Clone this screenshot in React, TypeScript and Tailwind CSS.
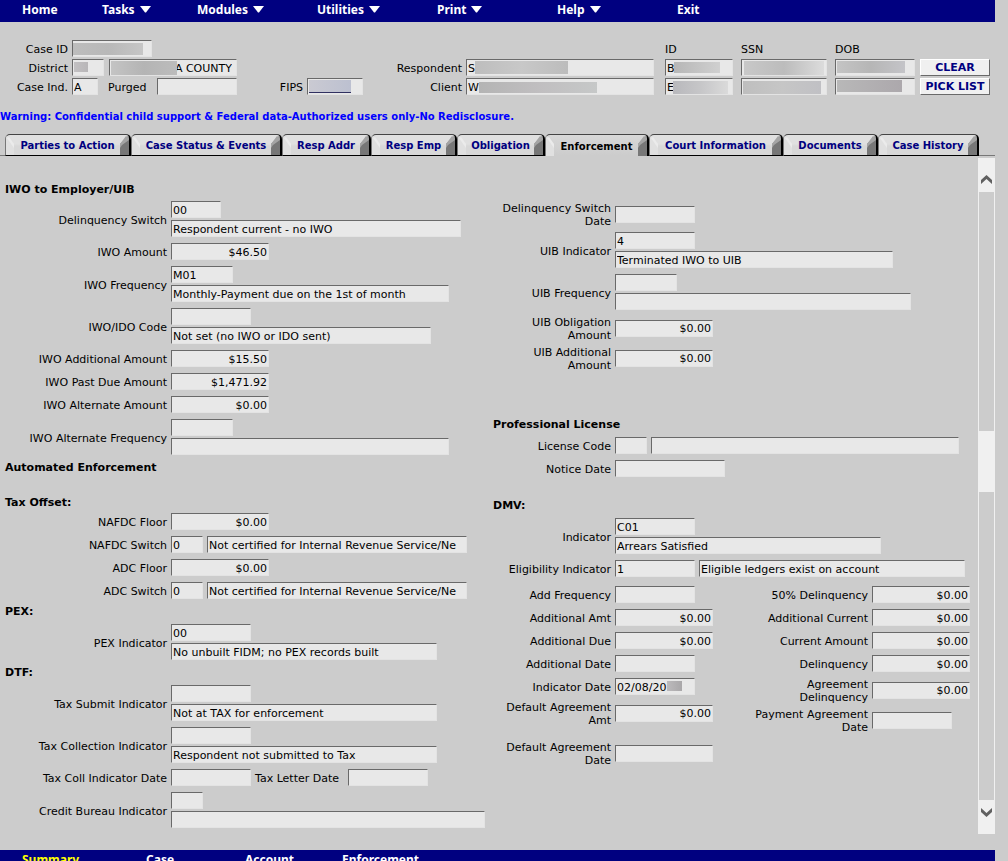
import React, { useId } from "react";

type FieldProps = {
  w: string;
  value?: string;
  label?: string;
  id?: string;
  money?: boolean;
  mask?: string;
  className?: string;
};

function Field({ w, value = "", label, id, money, mask, className = "px-px" }: FieldProps) {
  return (
    <span className={`relative block shrink-0 ${w}`}>
      <input
        id={id}
        aria-label={label}
        readOnly
        defaultValue={value}
        className={`block h-[17px] w-full border border-t-[#696969] border-r-[#e3e3e3] border-b-[#e3e3e3] border-l-[#696969] bg-[#e8e8e8] pt-px text-[11px] leading-[13px] text-black outline-none ${money ? "text-right" : ""} ${className}`}
      />
      {mask && <span className={`absolute bg-linear-to-r ${mask}`} />}
    </span>
  );
}

type RowProps = {
  label: string;
  fields: FieldProps[];
  stacked?: boolean;
  labelWidth?: string;
  children?: React.ReactNode;
};

function Row({ label, fields, stacked, labelWidth = "w-[118px]", children }: RowProps) {
  const id = useId();
  return (
    <div className="flex items-center gap-1">
      <label htmlFor={id} className={`shrink-0 pt-[3px] pb-px text-right ${labelWidth}`}>
        {label}
      </label>
      <div className={`flex py-[3px] ${stacked ? "flex-col gap-[2px]" : "items-center gap-1"}`}>
        {fields.map((f, i) => (
          <Field key={i} {...f} id={i === 0 ? id : undefined} label={i === 0 ? undefined : `${label} description`} />
        ))}
        {children}
      </div>
    </div>
  );
}

function LRow(props: RowProps) {
  return <Row {...props} labelWidth="w-[167px]" />;
}

function Heading({ children, className = "" }: { children: React.ReactNode; className?: string }) {
  return <h2 className={`flex h-[19px] items-center font-bold ${className}`}>{children}</h2>;
}

const menu = [
  { name: "Home", w: "w-20", drop: false },
  { name: "Tasks", w: "w-[95px]", drop: true },
  { name: "Modules", w: "w-[120px]", drop: true },
  { name: "Utilities", w: "w-[120px]", drop: true },
  { name: "Print", w: "w-[120px]", drop: true },
  { name: "Help", w: "w-[120px]", drop: true },
  { name: "Exit", w: "w-[120px]", drop: false },
];

const tabs = [
  { name: "Parties to Action", w: "w-[126px]" },
  { name: "Case Status & Events", w: "w-[151px]" },
  { name: "Resp Addr", w: "w-[89px]" },
  { name: "Resp Emp", w: "w-[86px]" },
  { name: "Obligation", w: "w-[88px]" },
  { name: "Enforcement", w: "w-[104px]" },
  { name: "Court Information", w: "w-[134px]" },
  { name: "Documents", w: "w-[95px]" },
  { name: "Case History", w: "w-[101px]" },
];

function Tab({ name, w, active }: { name: string; w: string; active: boolean }) {
  return (
    <button
      type="button"
      role="tab"
      aria-selected={active}
      className={`relative flex h-[22px] shrink-0 items-center justify-center overflow-hidden rounded-t-[5px] border-t border-r-2 border-l border-t-[#444] border-r-black border-l-[#777] pt-[2px] text-[10px] leading-3 font-bold ${w} ${active ? "bg-linear-to-b from-[#d8d8d8] to-[#ccc] text-black" : "border-b border-b-black bg-linear-to-b from-[#e0e0e0] from-45% to-[#d8d8d8] to-55% text-[#000080]"}`}
    >
      <svg className="absolute top-0 left-0" width="8" height="21" viewBox="0 0 8 21" aria-hidden="true">
        <path d="M0 0L8 10V21H0Z" fill="#e0e0e0" />
        <path d="M1 3L3 2L8 9V13Z" fill="#ebebeb" />
      </svg>
      <svg className="absolute top-0 right-0" width="9" height="21" viewBox="0 0 9 21" aria-hidden="true">
        <path d="M0 9L9 0V21H0Z" fill="#777" />
        <path d="M0 9L6 1L9 3V5L2 10L0 13Z" fill="#a4a4a4" />
      </svg>
      <span className="relative">{name}</span>
    </button>
  );
}

function Caret() {
  return (
    <svg width="11" height="7" viewBox="0 0 11 7" aria-hidden="true">
      <path d="M0 0H11L6 6.5H5Z" fill="white" />
    </svg>
  );
}

function Chevron({ up }: { up?: boolean }) {
  return (
    <svg width="11" height="9" viewBox="0 0 11 9" aria-hidden="true">
      <path d={up ? "M0 5L5.5 0L11 5V9L5.5 4L0 9Z" : "M0 0L5.5 5L11 0V4L5.5 9L0 4Z"} fill="#606060" />
    </svg>
  );
}

function ActionButton({ children }: { children: React.ReactNode }) {
  return (
    <button
      type="button"
      className="h-[17px] w-[70px] border border-t-white border-r-[#696969] border-b-[#696969] border-l-white bg-[#f0f0f0] text-[11px] leading-[13px] font-bold text-[#000080]"
    >
      {children}
    </button>
  );
}

const amt = "w-[98px]";
const notCertified = "Not certified for Internal Revenue Service/Ne";

function CaseHeader() {
  return (
    <header className="flex shrink-0 items-start pt-[18px]">
      <div className="flex w-[363px] shrink-0 flex-col gap-[2px]">
        <div className="flex items-center gap-1">
          <label htmlFor="caseId" className="w-[68px] pt-px text-right">Case ID</label>
          <Field id="caseId" w="w-20" mask="top-[3px] left-px h-3 w-[70px] from-[#bdbdbd] via-[#b8b8b8] to-[#c6c6c6]" />
        </div>
        <div className="flex items-center gap-1">
          <label htmlFor="district" className="w-[68px] pt-px text-right">District</label>
          <Field id="district" w="w-8" mask="top-[3px] left-[2px] h-[10px] w-[14px] from-[#c2c0c2] to-[#b8b6b8]" />
          <span className="pl-px">
            <Field
              w="w-[128px]"
              label="County"
              value="A COUNTY"
              className="pr-[4px] text-right"
              mask="top-[2px] left-[2px] h-[14px] w-[66px] from-[#c4c4c4] via-[#b4b4b4] to-[#bcbcbc]"
            />
          </span>
        </div>
        <div className="flex items-center gap-1">
          <label htmlFor="caseInd" className="w-[68px] pt-px text-right">Case Ind.</label>
          <Field id="caseInd" w="w-[26px]" value="A" />
          <label htmlFor="purged" className="w-[51px] pt-px pl-[6px]">Purged</label>
          <Field id="purged" w="w-20" />
          <label htmlFor="fips" className="w-[62px] pt-px text-right">FIPS</label>
          <Field id="fips" w="w-14" mask="top-[2px] left-[2px] h-[13px] w-[42px] border-b border-[#303060] from-[#cacad2] to-[#bcc0d0]" />
        </div>
      </div>
      <div className="flex w-[291px] shrink-0 flex-col gap-[2px] pt-[19px]">
        <div className="flex items-center gap-1">
          <label htmlFor="respondent" className="w-[99px] pt-px text-right">Respondent</label>
          <Field id="respondent" w="w-[188px]" value="S" mask="top-[2px] left-[9px] h-[13px] w-[93px] from-[#bdbdbd] via-[#c8c8c8] to-[#bcbcbc]" />
        </div>
        <div className="flex items-center gap-1">
          <label htmlFor="client" className="w-[99px] pt-px text-right">Client</label>
          <Field id="client" w="w-[188px]" value="W" mask="top-[4px] left-[13px] h-[11px] w-[118px] from-[#b4b4b4] via-[#c0bec0] to-[#c6c8c8]" />
        </div>
      </div>
      <div className="grid shrink-0 grid-cols-[68px_86px_80px] items-start gap-x-2 gap-y-[2px] pl-[11px]">
        <span className="h-[17px] pt-[3px]">ID</span>
        <span className="h-[17px] pt-[3px]">SSN</span>
        <span className="h-[17px] pt-[3px]">DOB</span>
        <Field w="w-[68px]" label="Respondent ID" value="B" mask="top-[3px] left-[9px] h-[11px] w-[46px] from-[#b6b6b6] to-[#d0d0d0]" />
        <Field w="w-[86px]" label="Respondent SSN" mask="top-[2px] left-[3px] h-[14px] w-[80px] from-[#c8c8c8] via-[#bcbcbc] to-[#dcdcdc]" />
        <Field w="w-20" label="Respondent date of birth" mask="top-[2px] left-[2px] h-3 w-[68px] from-[#c4c4c4] via-[#b6b6b6] to-[#c4c4c8]" />
        <Field w="w-[68px]" label="Client ID" value="E" mask="top-[3px] left-[8px] h-[13px] w-[55px] from-[#b8b8bc] via-[#c6c6c8] to-[#dadada]" />
        <Field w="w-[86px]" label="Client SSN" mask="top-[3px] left-[2px] h-[13px] w-[78px] from-[#bebebe] via-[#c6c6c6] to-[#c0c0c4]" />
        <Field w="w-20" label="Client date of birth" mask="top-[2px] left-[2px] h-3 w-[65px] from-[#b8b8b8] to-[#aca8ac]" />
      </div>
      <div className="flex flex-col gap-[2px] pt-[19px] pl-[5px]">
        <ActionButton>CLEAR</ActionButton>
        <ActionButton>PICK LIST</ActionButton>
      </div>
    </header>
  );
}

function LeftColumn() {
  return (
    <section className="pt-[24px]">
      <Heading className="pl-[5px]">IWO to Employer/UIB</Heading>
      <div className="-mt-px">
        <LRow label="Delinquency Switch" stacked fields={[{ w: "w-[50px]", value: "00" }, { w: "w-[290px]", value: "Respondent current - no IWO" }]} />
        <LRow label="IWO Amount" fields={[{ w: amt, value: "$46.50", money: true }]} />
        <LRow label="IWO Frequency" stacked fields={[{ w: "w-[62px]", value: "M01" }, { w: "w-[278px]", value: "Monthly-Payment due on the 1st of month" }]} />
        <LRow label="IWO/IDO Code" stacked fields={[{ w: "w-20" }, { w: "w-[260px]", value: "Not set (no IWO or IDO sent)" }]} />
        <LRow label="IWO Additional Amount" fields={[{ w: amt, value: "$15.50", money: true }]} />
        <LRow label="IWO Past Due Amount" fields={[{ w: amt, value: "$1,471.92", money: true }]} />
        <LRow label="IWO Alternate Amount" fields={[{ w: amt, value: "$0.00", money: true }]} />
        <LRow label="IWO Alternate Frequency" stacked fields={[{ w: "w-[62px]" }, { w: "w-[278px]" }]} />
      </div>
      <Heading className="pl-[5px]">Automated Enforcement</Heading>
      <Heading className="mt-4 -mb-[2px] pl-[5px]">Tax Offset:</Heading>
      <LRow label="NAFDC Floor" fields={[{ w: amt, value: "$0.00", money: true }]} />
      <LRow label="NAFDC Switch" fields={[{ w: "w-8", value: "0" }, { w: "w-[260px]", value: notCertified }]} />
      <LRow label="ADC Floor" fields={[{ w: amt, value: "$0.00", money: true }]} />
      <LRow label="ADC Switch" fields={[{ w: "w-8", value: "0" }, { w: "w-[260px]", value: notCertified }]} />
      <Heading className="pl-[5px]">PEX:</Heading>
      <LRow label="PEX Indicator" stacked fields={[{ w: "w-20", value: "00" }, { w: "w-[266px]", value: "No unbuilt FIDM; no PEX records built" }]} />
      <Heading className="pl-[5px]">DTF:</Heading>
      <LRow label="Tax Submit Indicator" stacked fields={[{ w: "w-20" }, { w: "w-[266px]", value: "Not at TAX for enforcement" }]} />
      <LRow label="Tax Collection Indicator" stacked fields={[{ w: "w-20" }, { w: "w-[266px]", value: "Respondent not submitted to Tax" }]} />
      <LRow label="Tax Coll Indicator Date" fields={[{ w: "w-20" }]}>
        <label htmlFor="taxLetterDate" className="w-[89px] pt-px whitespace-nowrap">Tax Letter Date</label>
        <Field id="taxLetterDate" w="w-20" />
      </LRow>
      <LRow label="Credit Bureau Indicator" stacked fields={[{ w: "w-8" }, { w: "w-[314px]" }]} />
    </section>
  );
}

function RightColumn() {
  return (
    <section className="pt-[43px]">
      <Row label="Delinquency Switch Date" fields={[{ w: "w-20" }]} />
      <Row label="UIB Indicator" stacked fields={[{ w: "w-20", value: "4" }, { w: "w-[278px]", value: "Terminated IWO to UIB" }]} />
      <Row label="UIB Frequency" stacked fields={[{ w: "w-[62px]" }, { w: "w-[296px]" }]} />
      <Row label="UIB Obligation Amount" fields={[{ w: amt, value: "$0.00", money: true }]} />
      <Row label="UIB Additional Amount" fields={[{ w: amt, value: "$0.00", money: true }]} />
      <Heading className="mt-[42px]">Professional License</Heading>
      <Row label="License Code" fields={[{ w: "w-8" }, { w: "w-[308px]" }]} />
      <Row label="Notice Date" fields={[{ w: "w-[110px]" }]} />
      <Heading className="mt-4">DMV:</Heading>
      <Row label="Indicator" stacked fields={[{ w: "w-20", value: "C01" }, { w: "w-[266px]", value: "Arrears Satisfied" }]} />
      <Row label="Eligibility Indicator" fields={[{ w: "w-20", value: "1" }, { w: "w-[266px]", value: "Eligible ledgers exist on account" }]} />
      <div className="mt-[3px] flex">
        <div className="w-[257px] shrink-0">
          <Row label="Add Frequency" fields={[{ w: "w-20" }]} />
          <Row label="Additional Amt" fields={[{ w: amt, value: "$0.00", money: true }]} />
          <Row label="Additional Due" fields={[{ w: amt, value: "$0.00", money: true }]} />
          <Row label="Additional Date" fields={[{ w: "w-20" }]} />
          <Row
            label="Indicator Date"
            fields={[{ w: "w-20", value: "02/08/20", mask: "top-[3px] left-[52px] h-[10px] w-[15px] from-[#bcbabc] to-[#a9a7a9]" }]}
          />
          <Row label="Default Agreement Amt" fields={[{ w: amt, value: "$0.00", money: true }]} />
          <div className="mt-[10px]">
            <Row label="Default Agreement Date" fields={[{ w: amt }]} />
          </div>
        </div>
        <div className="shrink-0">
          <Row label="50% Delinquency" fields={[{ w: amt, value: "$0.00", money: true }]} />
          <Row label="Additional Current" fields={[{ w: amt, value: "$0.00", money: true }]} />
          <Row label="Current Amount" fields={[{ w: amt, value: "$0.00", money: true }]} />
          <Row label="Delinquency" fields={[{ w: amt, value: "$0.00", money: true }]} />
          <Row label="Agreement Delinquency" fields={[{ w: amt, value: "$0.00", money: true }]} />
          <Row label="Payment Agreement Date" fields={[{ w: "w-20" }]} />
        </div>
      </div>
    </section>
  );
}

export default function App() {
  return (
    <div className="flex h-screen flex-col overflow-hidden bg-[#ccc] pr-[13px] font-['DejaVu_Sans',sans-serif] text-[11px] leading-[13px] text-black">
      <nav className="flex h-[22px] shrink-0 items-center bg-[#000080] pb-[3px] pl-[22px] font-['Noto_Sans',sans-serif] text-[12px] font-bold text-white">
        {menu.map((m) => (
          <button key={m.name} type="button" className={`flex shrink-0 items-center gap-[5px] ${m.w}`}>
            {m.name}
            {m.drop && <Caret />}
          </button>
        ))}
      </nav>

      <CaseHeader />

      <p className="shrink-0 pt-[15px] text-[10px] font-bold text-[#0000ff]">
        Warning: Confidential child support &amp; Federal data-Authorized users only-No Redisclosure.
      </p>

      <div role="tablist" className="mt-[11px] flex shrink-0 items-stretch">
        <div className="w-[5px] border-b border-[#777]" />
        {tabs.map((t) => (
          <Tab key={t.name} {...t} active={t.name === "Enforcement"} />
        ))}
        <div className="flex-1 border-b border-[#777]" />
      </div>

      <div className="flex min-h-0 flex-1">
        <main className="grid min-w-0 flex-1 grid-cols-[485px_1fr] gap-x-2 overflow-auto [scrollbar-width:none]">
          <LeftColumn />
          <RightColumn />
        </main>
        <div className="mt-[2px] mb-4 flex w-[17px] shrink-0 flex-col bg-[#f0f0f0]">
          <button type="button" aria-label="Scroll up" className="flex h-[34px] items-center justify-center pt-[9px]">
            <Chevron up />
          </button>
          <div className="mx-px flex-[239] bg-[#ccc]" />
          <div className="h-[61px] bg-[#f0f0f0]" />
          <div className="mx-px flex-[308] bg-[#ccc]" />
          <button type="button" aria-label="Scroll down" className="flex h-[34px] items-center justify-center pb-[9px]">
            <Chevron />
          </button>
        </div>
      </div>

      <nav className="-mb-[11px] flex h-[22px] shrink-0 items-center bg-[#000080] pb-[3px] pl-[22px] font-['Noto_Sans',sans-serif] text-[12px] font-bold text-white">
        <button type="button" className="w-[124px] text-left text-[#ffff00]">Summary</button>
        <button type="button" className="w-[99px] text-left">Case</button>
        <button type="button" className="w-[97px] text-left">Account</button>
        <button type="button" className="text-left">Enforcement</button>
      </nav>
    </div>
  );
}
